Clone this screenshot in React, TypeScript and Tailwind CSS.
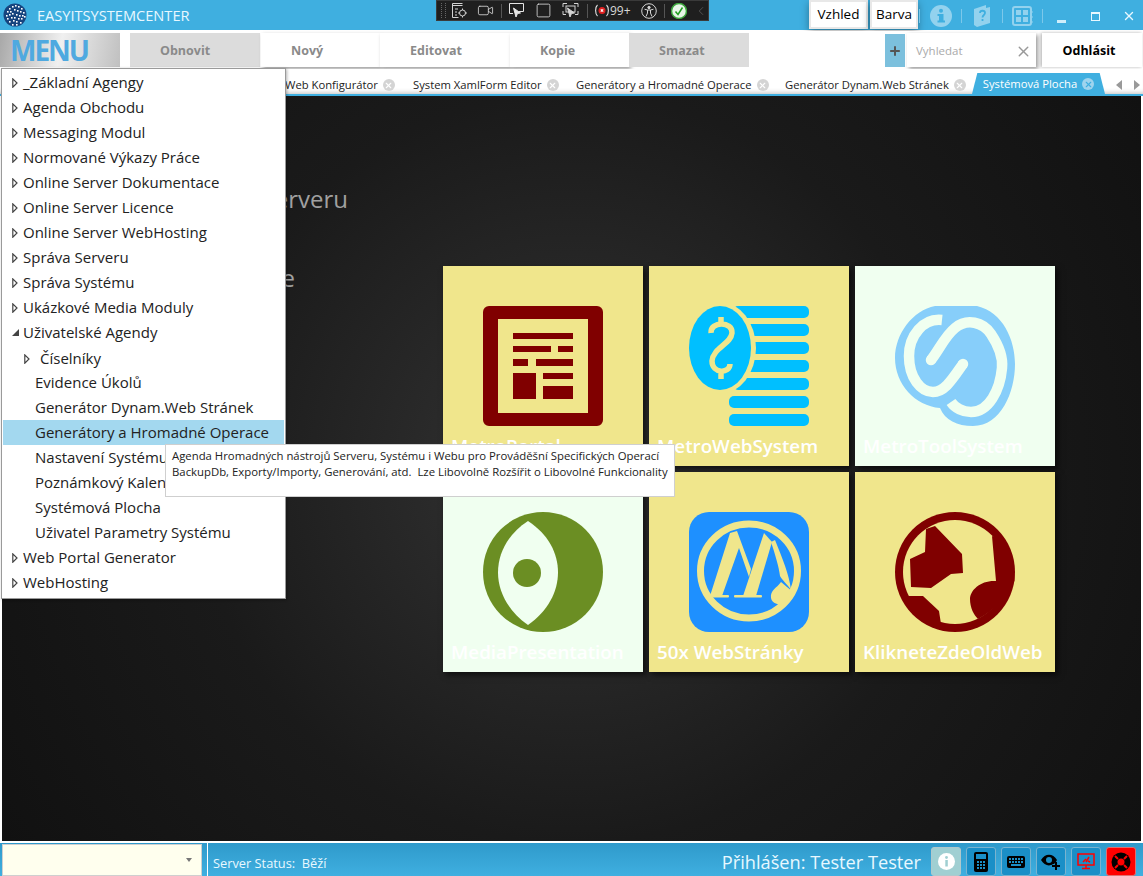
import React from 'react';
import { X, Plus, ChevronLeft, Video, Square } from 'lucide-react';

const FONT = { fontFamily: '"Open Sans", "Noto Sans", sans-serif' };

const logoDots = [
  [6, 5], [9, 3], [12, 2], [15, 3], [18, 5], [4, 8], [7, 8], [11, 6], [14, 7], [17, 8], [20, 9], [3, 12], [6, 11], [9, 10], [13, 11],
  [16, 12], [19, 12], [21, 13], [4, 15], [8, 14], [11, 14], [15, 15], [18, 15], [6, 18], [10, 17], [13, 18], [17, 19], [9, 21], [13, 21],
];

const TopLogo = () => (
  <svg width="26" height="24" viewBox="0 0 24 24">
    <circle cx="12" cy="12" r="11.5" fill="#17447e" />
    {logoDots.map(([x, y]) => (
      <rect key={`${x}-${y}`} x={x} y={y} width="1.6" height="1.6" fill="#fff" />
    ))}
  </svg>
);

const DebugBar = () => (
  <div className="ml-[241px] flex h-[21px] w-[273px] shrink-0 items-center bg-[#1f1f1f] text-[#d4d4d4] shadow-[inset_0_0_0_1px_#3a3a3a]">
    <div className="ml-[5px] h-[15px] w-[5px] border-x border-dotted border-[#666]" />
    <svg className="ml-[5px]" width="17" height="17" viewBox="0 0 17 17" fill="none" stroke="#d4d4d4">
      <path d="M1.5 1.5h10M1.5 3.5h10M1.5 1.5v14h6M4 7h3M4 10h2M4 13h2" />
      <circle cx="11.5" cy="11" r="3" />
      <path d="M11.5 6.5v1.5M11.5 14v1.5M7 11h1.500M14.500 11h1.500" />
    </svg>
    <Video className="ml-[9px]" size={17} strokeWidth={1.2} />
    <div className="ml-[7px] h-[14px] w-px bg-[#555]" />
    <svg className="ml-[6px]" width="17" height="17" viewBox="0 0 17 17" fill="none" stroke="#e6e6e6">
      <path d="M5 11.500H1.500v-10h14v8H11" />
      <path d="M5.500 6l7 5-3 .5L8 15z" fill="#e6e6e6" />
    </svg>
    <Square className="ml-[10px]" size={17} strokeWidth={1.2} />
    <svg className="ml-[10px]" width="17" height="17" viewBox="0 0 17 17" fill="none" stroke="#d4d4d4">
      <path d="M1 5V1.500h4M12 1.500h4V5M16 9v3.500h-3M1 9v3.500h3" />
      <rect x="4" y="4" width="9" height="6" />
      <path d="M5.500 6l7 5-3 .5L8 15z" fill="#d4d4d4" />
    </svg>
    <div className="ml-[8px] h-[14px] w-px bg-[#555]" />
    <svg className="ml-[6px]" width="16" height="15" viewBox="0 0 16 15" fill="none" stroke="#e6e6e6" strokeWidth="1.100">
      <path d="M3.500 2C1 4 1 11 3.500 13M12.500 2c2.500 2 2.500 9 0 11" />
      <circle cx="8" cy="7.500" r="3.500" fill="#e02020" stroke="none" />
      <path d="M6.800 6.300l2.400 2.400M9.200 6.300L6.800 8.700" stroke="#fff" />
    </svg>
    <span className="text-[12px] leading-none text-[#d8d8d8]">99+</span>
    <svg className="ml-[10px]" width="16" height="16" viewBox="0 0 16 16" fill="none" stroke="#d4d4d4" strokeWidth="1">
      <circle cx="8" cy="8" r="7.300" />
      <circle cx="8" cy="4.500" r="1.200" fill="#d4d4d4" />
      <path d="M3.500 6.200l3 .8v3l-1.500 3.500M12.500 6.200l-3 .8v3l1.500 3.500M6.500 7h3" />
    </svg>
    <div className="ml-[7px] h-[14px] w-px bg-[#555]" />
    <svg className="ml-[6px]" width="16" height="16" viewBox="0 0 16 16" fill="none">
      <circle cx="8" cy="8" r="7.500" fill="#e8f5e8" stroke="#3ca53c" strokeWidth="1.500" />
      <path d="M4.500 8.500l2.500 3 4.500-7" stroke="#1f9e1f" strokeWidth="1.500" />
    </svg>
    <ChevronLeft className="ml-[7px] text-[#666]" size={14} strokeWidth={1.2} />
  </div>
);

const InfoIcon = () => (
  <svg width="22" height="22" viewBox="0 0 22 22">
    <circle cx="11" cy="11" r="11" fill="#93d2ee" />
    <rect x="9" y="9" width="4.500" height="8" fill="#3fafe0" />
    <rect x="7.500" y="15.500" width="7.500" height="2" fill="#3fafe0" />
    <rect x="7.500" y="9" width="3" height="2" fill="#3fafe0" />
    <circle cx="11" cy="5.800" r="2" fill="#3fafe0" />
  </svg>
);

const BookIcon = () => (
  <svg width="18" height="24" viewBox="0 0 18 24">
    <path d="M1 5L13 1v3l4-1v16L4 23 1 21z" fill="#93d2ee" />
    <path d="M7 9c0-3 5-3 5 0 0 2-2.500 2-2.500 4.500M9.500 15v2" fill="none" stroke="#3fafe0" strokeWidth="1.800" />
  </svg>
);

const NotebookIcon = () => (
  <svg width="21" height="20" viewBox="0 0 21 20" fill="none">
    <rect x="1" y="1" width="18" height="18" rx="2" stroke="#93d2ee" strokeWidth="2" />
    <rect x="4" y="4" width="5" height="5" fill="#93d2ee" />
    <rect x="11" y="4" width="5" height="5" fill="#93d2ee" />
    <rect x="4" y="11" width="5" height="5" fill="#93d2ee" />
    <rect x="11" y="11" width="5" height="5" fill="#93d2ee" />
    <path d="M20 5v2M20 10v2M20 15v2" stroke="#93d2ee" />
  </svg>
);

const TitleBar = () => (
  <div className="flex h-[30px] items-start bg-[#3fafe0]">
    <div className="ml-[2px] mt-[3px] flex w-[193px] shrink-0 items-center">
      <TopLogo />
      <span className="ml-[9px] whitespace-nowrap text-[14.600px] leading-[24px] text-[#e8f8ff]">EASYITSYSTEMCENTER</span>
    </div>
    <DebugBar />
    <div className="ml-[100px] flex h-[29px] shrink-0 items-start gap-[2px]">
      <div className="flex h-[29px] w-[59px] items-center justify-center border-2 border-[#e8e8e8] bg-white text-[13.500px] text-black shadow-[0_3px_8px_rgba(0,0,0,0.35)]">Vzhled</div>
      <div className="flex h-[29px] w-[48px] items-center justify-center border-2 border-[#e8e8e8] bg-white text-[13.500px] text-black shadow-[0_3px_8px_rgba(0,0,0,0.35)]">Barva</div>
    </div>
    <div className="ml-[1px] mt-[4px] flex shrink-0 items-center text-white">
      <div className="h-[14px] w-px bg-[#7cc8ea]" />
      <div className="ml-[10px]"><InfoIcon /></div>
      <div className="ml-[9px] h-[14px] w-px bg-[#7cc8ea]" />
      <div className="ml-[11px]"><BookIcon /></div>
      <div className="ml-[11px] h-[14px] w-px bg-[#7cc8ea]" />
      <div className="ml-[9px]"><NotebookIcon /></div>
      <div className="ml-[9px] h-[14px] w-px bg-[#7cc8ea]" />
      <div className="ml-[14px] mt-[10px] h-[3px] w-[9px] bg-[#cfeefb]" />
      <div className="ml-[25px] h-[9px] w-[9px] border border-t-2 border-[#e8f8ff]" />
      <X className="ml-[22px]" size={14} strokeWidth={2.4} color="#e8f8ff" />
    </div>
  </div>
);

const ToolButton = ({ label, active, width }: { label: string; active?: boolean; width: string }) => (
  <div className={`flex h-[34px] items-center pl-[30px] pt-[2px] text-[12.500px] font-bold text-[#8a8a8a] ${width} ${active ? 'bg-white shadow-[2px_2px_4px_rgba(0,0,0,0.4)]' : 'bg-[#dcdcdc]'}`}>
    {label}
  </div>
);

const Toolbar = () => (
  <div className="mt-px flex h-[38px] items-start bg-white pt-[2px]">
    <div className="flex h-[34px] w-[120px] items-center bg-[linear-gradient(100deg,#a8a8a8,#f0f0f0_50%,#c0c0c0)] pl-[10px] text-[28px] font-bold leading-none tracking-[-2px] text-[#4fa9e0]">MENU</div>
    <div className="ml-[10px] flex">
      <ToolButton label="Obnovit" width="w-[130px]" />
      <div className="w-px" />
      <ToolButton label="Nový" active width="w-[119px]" />
      <ToolButton label="Editovat" active width="w-[130px]" />
      <ToolButton label="Kopie" active width="w-[119px]" />
      <ToolButton label="Smazat" width="w-[120px]" />
    </div>
    <div className="ml-[136px] mt-[1px] flex h-[33px] w-[20px] items-center justify-center bg-[#7cc0dd]">
      <Plus size={14} strokeWidth={3.4} color="#555" />
    </div>
    <div className="ml-[2px] flex h-[34px] w-[129px] items-center justify-between bg-white pl-[9px] pr-[4px] pt-[2px] shadow-[2px_2px_4px_rgba(0,0,0,0.4)]">
      <span className="text-[11.500px] text-[#aaa]">Vyhledat</span>
      <X size={17} strokeWidth={2} color="#999" />
    </div>
    <div className="ml-[6px] flex h-[34px] w-[100px] items-center justify-center bg-white pr-[6px] pt-[2px] text-[12.500px] font-bold text-black shadow-[-1px_0_3px_rgba(0,0,0,0.3)]">Odhlásit</div>
  </div>
);

const TabClose = ({ on }: { on?: boolean }) => (
  <span className={`ml-[5px] flex h-[12px] w-[12px] items-center justify-center rounded-full ${on ? 'bg-[#9fd4ee]' : 'bg-[#d4d4d4]'}`}>
    <X size={9} strokeWidth={3} color={on ? '#3fafe0' : '#fff'} />
  </span>
);

const tabs = [
  { label: 'Web Konfigurátor', width: 'w-[128px]' },
  { label: 'System XamlForm Editor', width: 'w-[163px]' },
  { label: 'Generátory a Hromadné Operace', width: 'w-[209px]' },
  { label: 'Generátor Dynam.Web Stránek', width: 'w-[187px]' },
];

const TabStrip = () => (
  <div className="flex h-[27px] items-end border-b-2 border-[#3fafe0] bg-white pl-[285px] shadow-[inset_0_-5px_5px_-4px_rgba(0,0,0,0.25)]">
    {tabs.map(tab => (
      <div key={tab.label} className={`flex h-[25px] items-center whitespace-nowrap pt-[7px] text-[11.250px] text-[#222] ${tab.width}`}>
        {tab.label}
        <TabClose />
      </div>
    ))}
    <div className="flex h-[21px] w-[133px] items-center justify-center rounded-t-[5px] bg-[#3fafe0] pt-[1px] text-[11.250px] text-white [clip-path:polygon(4%_0,96%_0,100%_100%,0_100%)]">
      Systémová Plocha
      <TabClose on />
    </div>
    <div className="mb-[4px] ml-[11px] h-0 w-0 border-y-[5px] border-r-[6px] border-y-transparent border-r-[#999]" />
    <div className="mb-[4px] ml-[12px] h-0 w-0 border-y-[5px] border-l-[6px] border-y-transparent border-l-[#999]" />
  </div>
);

const IconPortal = () => (
  <svg width="120" height="120" viewBox="0 0 120 120" fill="#800000">
    <path fillRule="evenodd" d="M6 0h108a6 6 0 0 1 6 6v108a6 6 0 0 1-6 6H6a6 6 0 0 1-6-6V6a6 6 0 0 1 6-6zM15 13v94h90V13z" />
    <rect x="30" y="27" width="60" height="6" />
    <rect x="30" y="40" width="38" height="6" />
    <rect x="75" y="40" width="15" height="6" />
    <rect x="30" y="53" width="15" height="7" />
    <rect x="53" y="53" width="37" height="7" />
    <rect x="30" y="67" width="23" height="26" />
    <rect x="60" y="67" width="30" height="6" />
    <rect x="60" y="80" width="30" height="13" />
  </svg>
);

const IconWeb = () => (
  <svg width="120" height="120" viewBox="0 0 120 120" fill="#00bfff">
    {[0, 18, 36, 54, 72].map(y => (
      <rect key={y} x="44" y={y} width="76" height="12" rx="5" />
    ))}
    {[90, 108].map(y => (
      <rect key={y} x="40" y={y} width="80" height="12" rx="5" />
    ))}
    <ellipse cx="31" cy="42" rx="36" ry="46" fill="#f0e68c" />
    <ellipse cx="31" cy="42" rx="31" ry="42" />
    <path d="M22 27C21 15 44 15 43 27 42 38 24 42 23 55 23 68 41 68 41 58M32 11v8M32 66v7" fill="none" stroke="#f0e68c" strokeWidth="5.500" />
  </svg>
);

const IconTool = () => (
  <svg width="120" height="120" viewBox="0 0 120 120" fill="#87cefa">
    <path d="M40 0H82C108 6 120 34 120 58 120 86 106 120 78 120 62 120 50 114 45 102 20 100 0 78 0 52 0 28 18 4 40 0z" />
    <g fill="none" stroke="#f0fff0" strokeWidth="10.500">
      <path d="M47 14C28 12 14 30 14 50 14 72 26 86 38 86 50 86 58 72 68 58" />
      <path d="M36 54C44 44 50 30 60 22 72 12 88 16 96 28 104 40 108 52 107 62 105 84 94 106 76 106 68 106 60 102 56 96" />
    </g>
    <circle cx="68" cy="58" r="5.250" fill="#f0fff0" />
    <circle cx="36" cy="54" r="5.250" fill="#f0fff0" />
  </svg>
);

const IconMedia = () => (
  <svg width="120" height="120" viewBox="0 0 120 120" fill="#6b8e23">
    <ellipse cx="60" cy="60" rx="60" ry="60" />
    <path d="M45 9C5 35 5 85 45 113 85 85 85 35 45 9z" fill="#f0fff0" />
    <ellipse cx="44" cy="61" rx="14" ry="14" />
  </svg>
);

const IconStranky = () => (
  <svg width="120" height="120" viewBox="0 0 120 120" fill="#f0e68c">
    <rect width="120" height="120" rx="20" fill="#1e90ff" />
    <ellipse cx="60" cy="59" rx="48.500" ry="47" fill="none" stroke="#f0e68c" strokeWidth="7" />
    <path d="M41 21L48 19 62 57 60 65 50 36 33 84H21z" />
    <path d="M75 21L83 30 67 84H54z" />
    <path d="M82 30L86 28C94 48 100 62 102 78 98 72 93 68 91 64 90 55 86 42 82 30z" />
    <path d="M92 70C88 76 81 78 82 86 83 92 90 92 94 94L104 80z" />
    <rect x="23" y="83" width="17" height="2.500" rx="1" />
    <rect x="45" y="83" width="28" height="2.500" rx="1" />
  </svg>
);

const IconOldWeb = () => (
  <svg width="120" height="120" viewBox="0 0 120 120" fill="#800000">
    <ellipse cx="60" cy="60" rx="60" ry="60" />
    <ellipse cx="60" cy="60" rx="52" ry="52" fill="#f0e68c" />
    <path d="M31 17l9-3 27 28 1 19-12 1-20 14-20-1-1-28 15-7z" />
    <path d="M8 84h20l16 15 2 13c-18-4-32-14-38-28z" />
    <path d="M97 24L101 69C86 68 75 78 75 87 75 96 79 103 83 107 100 98 111 84 119.500 69 120 50 112 36 104 27z" />
  </svg>
);

const tiles = [
  { label: 'MetroPortal', bg: 'bg-[#f0e68c]', icon: <IconPortal /> },
  { label: 'MetroWebSystem', bg: 'bg-[#f0e68c]', icon: <IconWeb /> },
  { label: 'MetroToolSystem', bg: 'bg-[#f0fff0]', icon: <IconTool /> },
  { label: 'MediaPresentation', bg: 'bg-[#f0fff0]', icon: <IconMedia /> },
  { label: '50x WebStránky', bg: 'bg-[#f0e68c]', icon: <IconStranky /> },
  { label: 'KlikneteZdeOldWeb', bg: 'bg-[#f0e68c]', icon: <IconOldWeb /> },
];

const Tile = ({ label, bg, icon }: { label: string; bg: string; icon: React.ReactNode }) => (
  <div className={`flex h-[200px] w-[200px] flex-col items-center pt-[40px] shadow-[3px_3px_6px_rgba(0,0,0,0.6)] ${bg}`}>
    {icon}
    <div className="mt-[7px] w-full whitespace-nowrap pl-[8px] text-[18.800px] font-semibold leading-[26px] text-white">{label}</div>
  </div>
);

const Content = () => (
  <div className="flex h-[745px] flex-col border-x-2 border-white bg-[radial-gradient(circle_at_50%_50%,#343434,#1a1a1a_55%,#111)]">
    <div className="mt-[90px] w-[346px] text-right text-[24px] leading-[26px] text-[#a0a0a0]">Serveru</div>
    <div className="mt-[53px] w-[293px] text-right text-[24px] leading-[26px] text-[#a0a0a0]">e</div>
    <div className="ml-[441px] mt-[-25px] grid w-[612px] grid-cols-3 gap-[6px]">
      {tiles.map(tile => (
        <Tile key={tile.label} {...tile} />
      ))}
    </div>
  </div>
);

const statusIcons = [
  <svg key="calc" width="14" height="20" viewBox="0 0 14 20"><rect width="14" height="20" rx="2" /><rect x="2" y="2" width="10" height="5" fill="#1a8fc7" /><path d="M3 9h2v2H3zM6 9h2v2H6zM9 9h2v2H9zM3 12h2v2H3zM6 12h2v2H6zM9 12h2v2H9zM3 15h2v2H3zM6 15h2v2H6zM9 15h2v2H9z" fill="#1a8fc7" /></svg>,
  <svg key="kbd" width="18" height="12" viewBox="0 0 18 12"><rect width="18" height="12" rx="2" /><path d="M2 2h2v2H2zM5 2h2v2H5zM8 2h2v2H8zM11 2h2v2h-2zM14 2h2v2h-2zM2 5h2v2H2zM5 5h2v2H5zM8 5h2v2H8zM11 5h2v2h-2zM14 5h2v2h-2zM4 8h10v2H4z" fill="#1a8fc7" /></svg>,
  <svg key="eye" width="20" height="16" viewBox="0 0 20 16"><path fillRule="evenodd" d="M0 6c4-7 12-7 16 0-1 2-2 3-3 4h-1c-4 3-9 1-12-4zm8-3a3 3 0 1 0 0 6 3 3 0 0 0 0-6z" /><path d="M14 8h2v3h3v2h-3v3h-2v-3h-3v-2h3z" /></svg>,
  <svg key="monitor" width="18" height="17" viewBox="0 0 18 17" fill="none" stroke="#f00" strokeWidth="1.500"><rect x="1" y="1" width="16" height="11" /><path d="M9 12v3M5 15.500h8M6 9l3-3M9 9l3-5M11 8l2 1" /></svg>,
];

const StatusBar = () => (
  <div className="flex h-[33px] items-start bg-[linear-gradient(#2f9acb,#3fafe0)]">
    <div className="ml-[2px] mt-px flex h-[32px] w-[200px] items-center justify-end border border-[#cfcfcf] bg-[#ffffee] pr-[9px]">
      <div className="h-0 w-0 border-x-[3px] border-t-[4px] border-x-transparent border-t-[#777]" />
    </div>
    <div className="ml-[5px] h-[33px] w-px bg-white" />
    <div className="ml-[5px] mt-[10px] text-[12.800px] leading-[20px] text-[#e8f8ff]">Server Status:&nbsp; Běží</div>
    <div className="ml-auto mt-[6px] text-[18.200px] leading-[26px] text-[#e8f8ff]">Přihlášen: Tester Tester</div>
    <div className="ml-[10px] mr-[7px] mt-[4px] flex gap-[5px]">
      <div className="flex h-[29px] w-[30px] items-center justify-center rounded-[3px] border border-[#b0c8cc] bg-[#a0cfd2]">
        <svg width="17" height="17" viewBox="0 0 17 17"><circle cx="8.500" cy="8.500" r="8.500" fill="#fff" /><rect x="7.300" y="7" width="2.500" height="6.500" fill="#a0cfd2" /><circle cx="8.500" cy="4.500" r="1.400" fill="#a0cfd2" /></svg>
      </div>
      {statusIcons.map((icon, i) => (
        <div key={i} className="flex h-[29px] w-[30px] items-center justify-center rounded-[3px] border border-[#7ab3cf] bg-[#1a8fc7]">
          {icon}
        </div>
      ))}
      <div className="flex h-[29px] w-[30px] items-center justify-center rounded-[3px] border border-[#e07070] bg-[#ff0000]">
        <svg width="20" height="20" viewBox="0 0 20 20"><circle cx="10" cy="10" r="9.500" /><circle cx="10" cy="10" r="3.500" fill="#f00" /><path d="M4 4l3 3M16 4l-3 3M4 16l3-3M16 16l-3-3" stroke="#f00" strokeWidth="2" /></svg>
      </div>
    </div>
  </div>
);

const menuTop = ['_Základní Agengy', 'Agenda Obchodu', 'Messaging Modul', 'Normované Výkazy Práce', 'Online Server Dokumentace', 'Online Server Licence', 'Online Server WebHosting', 'Správa Serveru', 'Správa Systému', 'Ukázkové Media Moduly'];
const menuSub = ['Evidence Úkolů', 'Generátor Dynam.Web Stránek', 'Generátory a Hromadné Operace', 'Nastavení Systému', 'Poznámkový Kalendář', 'Systémová Plocha', 'Uživatel Parametry Systému'];

const Arrow = () => (
  <svg width="6" height="10" viewBox="0 0 6 10" fill="#fff" stroke="#444" strokeWidth="1.200">
    <path d="M.8.8L5 5 .8 9.200z" />
  </svg>
);

const MenuRow = ({ label }: { label: string }) => (
  <div className="flex h-[25px] items-center whitespace-nowrap pl-[10px] pr-[2px]">
    <Arrow />
    <span className="ml-[5px]">{label}</span>
  </div>
);

const SideMenu = () => (
  <div className="absolute left-px top-[68px] w-[285px] border border-[#9a9a9a] bg-white pb-[3px] pt-px text-[15px] text-[#222] shadow-[1px_1px_3px_rgba(0,0,0,0.3)]">
    {menuTop.map(label => (
      <MenuRow key={label} label={label} />
    ))}
    <div className="flex h-[25px] items-center pl-[10px]">
      <span className="h-0 w-0 border-b-[7px] border-l-[7px] border-b-[#444] border-l-transparent" />
      <span className="ml-[4px]">Uživatelské Agendy</span>
    </div>
    <div className="flex h-[25px] items-center pl-[22px] pt-[2px]">
      <Arrow />
      <span className="ml-[10px]">Číselníky</span>
    </div>
    {menuSub.map(label => (
      <div key={label} className={`mx-px flex h-[25px] items-center whitespace-nowrap pl-[32px] ${label === 'Generátory a Hromadné Operace' ? 'bg-[#a3d8ef]' : ''}`}>
        {label}
      </div>
    ))}
    <MenuRow label="Web Portal Generator" />
    <MenuRow label="WebHosting" />
  </div>
);

const Tooltip = () => (
  <div className="absolute left-[165px] top-[444px] h-[53px] w-[510px] border border-[#cfcfcf] bg-white px-[6px] pt-[3px] text-[11.350px] leading-[16px] text-[#222]">
    <div className="whitespace-nowrap">Agenda Hromadných nástrojů Serveru, Systému i Webu pro Prováděšní Specifických Operací</div>
    <div className="whitespace-pre">BackupDb, Exporty/Importy, Generování, atd.  Lze Libovolně Rozšířit o Libovolné Funkcionality</div>
  </div>
);

export default function App() {
  return (
    <div className="relative flex h-[876px] w-[1143px] flex-col overflow-hidden bg-white" style={FONT}>
      <TitleBar />
      <Toolbar />
      <TabStrip />
      <Content />
      <div className="h-[2px] bg-white" />
      <StatusBar />
      <SideMenu />
      <Tooltip />
    </div>
  );
}
